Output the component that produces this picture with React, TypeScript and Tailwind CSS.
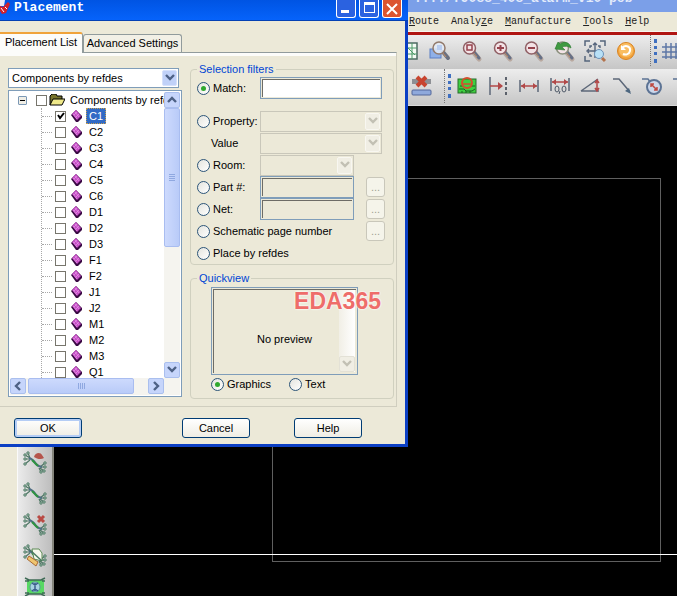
import type { ReactNode } from "react"
import { clsx } from "clsx"

const components = ["C1", "C2", "C3", "C4", "C5", "C6", "D1", "D2", "D3", "F1", "F2", "J1", "J2", "M1", "M2", "M3", "Q1"]

const menus = [
  { key: "R", rest: "oute" },
  { before: "Analy", key: "z", rest: "e" },
  { key: "M", rest: "anufacture" },
  { key: "T", rest: "ools" },
  { key: "H", rest: "elp" },
]

/* ---------- icons ---------- */

function Icon({ children }: { children: ReactNode }) {
  return (
    <svg viewBox="0 0 24 24" className="h-6 w-6 shrink-0" fill="none">
      {children}
    </svg>
  )
}

function Magnifier({ children, ring = "#8f5f64" }: { children?: ReactNode; ring?: string }) {
  return (
    <Icon>
      <path d="M15 14l5 6" stroke="#b9a9a0" strokeWidth="5" strokeLinecap="round" />
      <path d="M15 13l5 6" stroke="#667086" strokeWidth="3" strokeLinecap="round" />
      <path d="M14 13l4 5" stroke="#c98f62" strokeWidth="1" />
      <circle cx="10.500" cy="9" r="6" fill="#f3e3e6" stroke={ring} strokeWidth="1.500" />
      {children}
    </Icon>
  )
}

const GridIcon = () => (
  <Icon>
    <rect x="3" y="4" width="17" height="16" fill="#f4fbf4" stroke="#4c6b62" strokeWidth="1.500" />
    <path d="M3 9h17M3 15h17M9 4v16M15 4v16M9 7l9 9" stroke="#4c9a68" />
  </Icon>
)

const ZoomWindowIcon = () => (
  <Icon>
    <rect x="2" y="10" width="11" height="9" fill="#8fb0e8" stroke="#5b7fc4" />
    <path d="M15 13l5 6" stroke="#6a7080" strokeWidth="4" strokeLinecap="round" />
    <path d="M14 13l4 5" stroke="#c98f62" />
    <circle cx="11" cy="9" r="6" fill="#e3ebf7" fillOpacity=".85" stroke="#927a6c" strokeWidth="1.500" />
    <rect x="9" y="6" width="5" height="5" fill="#b9cdf0" />
  </Icon>
)

const ZoomPrevIcon = () => (
  <Magnifier ring="#8a8f7c">
    <path d="M3 10l3-7 2 2c4-3 10-2 11 4-3-2-6-2-9-1l3 3z" fill="#3f9a41" stroke="#2a7a30" strokeWidth=".6" />
  </Magnifier>
)

const ZoomFitIcon = () => (
  <Icon>
    <path d="M2 7V2h5M17 2h5v5M2 17v5h5" stroke="#56657c" strokeWidth="1.500" />
    <path d="M12 5v14M5 12h14M10 6l2-2 2 2M6 10l-2 2 2 2M7 9V7h2M15 7h2v2M7 15v2h2" stroke="#56657c" strokeWidth="1.400" />
    <path d="M19 19l3 3" stroke="#b3734d" strokeWidth="3" />
    <circle cx="16" cy="15" r="4.500" fill="#b8e0f6" stroke="#6d92b8" />
  </Icon>
)

const RefreshIcon = () => (
  <Icon>
    <circle cx="12" cy="12" r="8.500" fill="#f3a33c" stroke="#d98422" />
    <circle cx="12" cy="11" r="7" fill="#f9bd62" />
    <path d="M8 9c4-4 9-1 8 3-1 4-5 4-7 3" stroke="#fff" strokeWidth="2" />
    <path d="M7 6v5h5z" fill="#fff" />
  </Icon>
)

const BlueGridIcon = () => (
  <Icon>
    <path d="M5 4v16M10 4v16M15 4v16M20 4v16M1 8h22M1 13h22M1 18h22" stroke="#5f78a6" strokeWidth="1.500" />
  </Icon>
)

const DeleteIcon = () => (
  <Icon>
    <rect x="2" y="5" width="19" height="5" fill="#8e9095" />
    <path d="M7 3l9 9M16 3l-9 9" stroke="#c8442f" strokeWidth="4" />
    <rect x="2" y="16" width="19" height="5" rx="1" fill="#8fa9dc" stroke="#53679a" />
  </Icon>
)

const BoardIcon = () => (
  <Icon>
    <rect x="3" y="5" width="18" height="14" fill="#3ed040" stroke="#2a6b2c" />
    <path d="M4 15h5l2 2h6l3-2M5 12h3M16 12h4M7 17v2M11 17v2M15 17v2" stroke="#1c5f22" />
    <circle cx="12" cy="9" r="5" stroke="#d2502d" strokeWidth="2" />
    <path d="M8 10h8" stroke="#d2502d" strokeWidth="1.500" />
  </Icon>
)

const DatumIcon = () => (
  <Icon>
    <path d="M4 3v18" stroke="#5c6778" strokeWidth="1.500" />
    <path d="M20 3v18" stroke="#333b48" strokeDasharray="3 2" strokeWidth="1.500" />
    <path d="M4 12h12" stroke="#b24848" strokeWidth="1.500" />
    <path d="M12 8l5 4-5 4z" fill="#b24848" />
  </Icon>
)

const LinearIcon = () => (
  <Icon>
    <path d="M3 6v12M21 6v12" stroke="#5c6778" strokeWidth="1.500" />
    <path d="M4 12h16" stroke="#b24848" strokeWidth="1.500" />
    <path d="M8 9l-4 3 4 3zM16 9l4 3-4 3z" fill="#b24848" />
  </Icon>
)

const OrdinateIcon = () => (
  <Icon>
    <path d="M3 4v13M21 4v13" stroke="#5c6778" strokeWidth="1.500" />
    <path d="M4 8h16" stroke="#b24848" strokeWidth="1.500" />
    <path d="M8 5L4 8l4 3zM16 5l4 3-4 3z" fill="#b24848" />
    <ellipse cx="9" cy="15" rx="2" ry="3" stroke="#4d5867" />
    <ellipse cx="16" cy="15" rx="2" ry="3" stroke="#4d5867" />
    <path d="M12 17l-1 3" stroke="#4d5867" />
  </Icon>
)

const AngleIcon = () => (
  <Icon>
    <path d="M2 17L19 5M2 17h18" stroke="#5c6778" strokeWidth="1.500" />
    <path d="M18 7v9M16 9l2-3 2 3M16 14l2 3 2-3" stroke="#b24848" strokeWidth="1.500" />
  </Icon>
)

const LeaderIcon = () => (
  <Icon>
    <path d="M3 5h6l11 13" stroke="#5c6778" strokeWidth="1.500" />
    <path d="M21 20l-6-3 4-3z" fill="#4d6780" />
  </Icon>
)

const DiameterIcon = () => (
  <Icon>
    <path d="M1 5h6l3 4" stroke="#5c7394" strokeWidth="1.500" />
    <circle cx="13" cy="13" r="7" fill="#ccd7ea" stroke="#5c7394" strokeWidth="2" />
    <path d="M10 10l6 6M10 13v-3h3M16 13v3h-3" stroke="#bd4a42" strokeWidth="1.500" />
  </Icon>
)

// routed net with three pins at both ends, shared by the side toolbar
function NetIcon({ children }: { children?: ReactNode }) {
  return (
    <Icon>
      <path d="M2 4l5 3M2 8h5M2 13l5-4M5 2l2 5M17 16l5-4M17 16h5M17 17l4 3M16 17l2 4" stroke="#4f7765" strokeWidth="1.200" />
      <path d="M6 7c4 1 5 3 7 6 2 2 3 3 6 3" stroke="#506d85" strokeWidth="2.200" />
      <path d="M9 9l6 6" stroke="#2f9440" strokeWidth="2" />
      {[[2, 4], [2, 8], [2, 13], [5, 2], [22, 12], [22, 16], [21, 20], [18, 21]].map(([x, y]) => (
        <circle key={`${x}-${y}`} cx={x} cy={y} r="1.200" fill="#c7dccf" stroke="#3a6b54" strokeWidth=".9" />
      ))}
      {children}
    </Icon>
  )
}

const BoxNetIcon = () => (
  <Icon>
    <rect x="4" y="5" width="17" height="14" fill="#58d863" />
    <path d="M2 3l4 2h12l4-2M2 21l4-2h12l4 2M2 6h4M19 6h3M2 18h4M19 18h3" stroke="#3f6b56" strokeWidth="1.500" />
    <circle cx="12" cy="12" r="5" fill="#a8d3e2" stroke="#5a93a0" />
    <path d="M12 8v8M9 8l3 2 3-2M9 16l3-2 3 2" stroke="#3b5d8c" strokeWidth="1.500" />
  </Icon>
)

const PartIcon = () => (
  <svg viewBox="0 0 11 12" className="h-3 w-[11px] shrink-0">
    <path d="M0 5l5 7h2l4-4V6L5 0z" fill="#3a0a44" />
    <path d="M1 4l4-4 5 6-4 4z" fill="#c54cc5" />
    <path d="M2 4l4 5M4 2l4 5M3 5l3-3M5 7l3-3" stroke="#e89ae8" strokeWidth=".7" />
  </svg>
)

const FolderIcon = () => (
  <svg viewBox="0 0 16 12" className="h-3 w-4 shrink-0">
    <path d="M1 11V2l2-2h4l1 2h5v3" fill="#77742c" stroke="#000" />
    <path d="M1 11l3-6h12l-3 6z" fill="#efe98a" stroke="#000" />
  </svg>
)

function Chevron({ dir = "down", muted }: { dir?: "up" | "down" | "left" | "right"; muted?: boolean }) {
  const paths = { down: "M1 2l4 4 4-4", up: "M1 7l4-4 4 4", left: "M7 1L3 5l4 4", right: "M3 1l4 4-4 4" }
  return (
    <svg viewBox="0 0 10 10" className="h-[10px] w-[10px]" fill="none">
      <path d={paths[dir]} stroke={muted ? "#c2c0b4" : "#4d6185"} strokeWidth="2.400" />
    </svg>
  )
}

/* ---------- form pieces ---------- */

function Dropdown({ label, value, disabled, className }: { label: string; value?: string; disabled?: boolean; className?: string }) {
  return (
    <div className={clsx("relative", className)}>
      <select
        aria-label={label}
        disabled={disabled}
        className={clsx(
          "h-full w-full appearance-none border pl-[3px] pr-5 text-[11px] text-black outline-none",
          disabled ? "border-[#c9c7ba] bg-[#ece9d8]" : "border-[#7f9db9] bg-white",
        )}
      >
        <option>{value}</option>
      </select>
      <span
        className={clsx(
          "pointer-events-none absolute inset-y-[2px] right-[2px] flex w-[15px] items-center justify-center rounded-[2px] border",
          disabled ? "border-[#f8f7f1] bg-[#f0eee4]" : "border-[#d6e1fb] bg-[#c0d1f8]",
        )}
      >
        <Chevron muted={disabled} />
      </span>
    </div>
  )
}

function Radio({ name, label, checked }: { name: string; label: string; checked?: boolean }) {
  return (
    <label className="flex items-center gap-[3px] whitespace-nowrap">
      <span className="grid h-[13px] w-[13px] shrink-0 place-items-center">
        <input
          type="radio"
          name={name}
          defaultChecked={checked}
          className="peer col-start-1 row-start-1 h-[13px] w-[13px] appearance-none rounded-full border border-[#2c5579] bg-linear-to-br from-[#e4e4de] to-white"
        />
        <span className="pointer-events-none col-start-1 row-start-1 hidden h-[5px] w-[5px] rounded-full bg-[#2fa82f] peer-checked:block" />
      </span>
      {label}
    </label>
  )
}

function CheckBox({ id, checked }: { id: string; checked?: boolean }) {
  return (
    <span className="grid h-[11px] w-[11px] shrink-0 place-items-center">
      <input
        id={id}
        type="checkbox"
        defaultChecked={checked}
        className="peer col-start-1 row-start-1 h-[11px] w-[11px] appearance-none border border-[#77756c] bg-white"
      />
      <svg viewBox="0 0 8 8" className="pointer-events-none col-start-1 row-start-1 hidden h-2 w-2 peer-checked:block">
        <path d="M1 3l2 3 4-5" stroke="#000" strokeWidth="2" fill="none" />
      </svg>
    </span>
  )
}

function ScrollButton({ dir }: { dir: "up" | "down" | "left" | "right" }) {
  return (
    <button
      type="button"
      aria-label={`Scroll ${dir}`}
      className="flex h-4 w-4 shrink-0 items-center justify-center rounded-[2px] border border-[#aabfee] bg-[#c6d5fb]"
    >
      <Chevron dir={dir} />
    </button>
  )
}

function TextField({ label, disabled, className }: { label: string; disabled?: boolean; className?: string }) {
  return (
    <input
      type="text"
      aria-label={label}
      disabled={disabled}
      className={clsx(
        "h-[22px] border border-[#7f9db9] px-1 shadow-[inset_0_0_0_1px_#ece9d8,inset_2px_2px_0_#6d6c66]",
        disabled ? "bg-[#ece9d8]" : "bg-white",
        className,
      )}
    />
  )
}

function MoreButton({ label }: { label: string }) {
  return (
    <button
      type="button"
      aria-label={label}
      disabled
      className="ml-3 flex h-5 w-[19px] items-center justify-center rounded-[3px] border border-[#c9c7ba] bg-[#f5f4ea] text-[#a1a192]"
    >
      ...
    </button>
  )
}

function FilterRow({ children, control }: { children: ReactNode; control?: ReactNode }) {
  return (
    <div className="flex h-[22px] items-center">
      <div className="w-[63px] shrink-0">{children}</div>
      {control}
    </div>
  )
}

function PushButton({ children, primary }: { children: ReactNode; primary?: boolean }) {
  return (
    <button
      type="button"
      className={clsx(
        "h-5 w-[68px] rounded-[3px] border border-[#003c74] bg-linear-to-b from-white to-[#efede4]",
        primary && "shadow-[inset_0_0_0_2px_#b5cdf5]",
      )}
    >
      {children}
    </button>
  )
}

/* ---------- dialog ---------- */

function ComponentTree() {
  return (
    <div className="mt-[2px] flex h-[307px] flex-col border border-[#7f9db9] bg-white p-px">
      <div className="flex min-h-0 flex-1">
        <div className="min-w-0 flex-1 overflow-hidden">
          <div className="flex h-4 items-center pl-2">
            <button
              type="button"
              aria-label="Collapse"
              className="mr-[9px] flex h-[9px] w-[9px] shrink-0 items-center justify-center rounded-[1px] border border-[#7b98b5] bg-[#f0eee6]"
            >
              <span className="h-px w-[5px] bg-black" />
            </button>
            <CheckBox id="all" />
            <span className="ml-[2px] flex">
              <FolderIcon />
            </span>
            <label htmlFor="all" className="ml-[5px] whitespace-nowrap">
              Components by refdes
            </label>
          </div>
          <ul className="ml-[31px] border-l border-dotted border-[#a8a8a8]">
            {components.map((name) => (
              <li key={name} className="flex h-4 items-center">
                <span className="mr-[3px] w-[10px] border-t border-dotted border-[#a8a8a8]" />
                <CheckBox id={name} checked={name === "C1"} />
                <span className="ml-[5px] flex">
                  <PartIcon />
                </span>
                <label
                  htmlFor={name}
                  className={clsx(
                    "ml-1 h-4 px-[3px] leading-4",
                    name === "C1" && "bg-[#316ac5] text-white outline-1 -outline-offset-1 outline-dotted outline-[#c9a050]",
                  )}
                >
                  {name}
                </label>
              </li>
            ))}
          </ul>
        </div>
        <div className="flex w-4 flex-col bg-[#f5f4ef]">
          <ScrollButton dir="up" />
          <div className="flex h-[139px] flex-col items-center justify-center gap-px rounded-[2px] border border-[#a9bdf0] bg-linear-to-r from-[#cddafd] to-[#b9cbf8]">
            {[0, 1, 2, 3].map((i) => (
              <span key={i} className="h-px w-[6px] bg-[#8fa8e0]" />
            ))}
          </div>
          <div className="mt-auto">
            <ScrollButton dir="down" />
          </div>
        </div>
      </div>
      <div className="flex h-[17px] bg-[#f5f4ef] pr-4">
        <ScrollButton dir="left" />
        <div className="ml-[2px] flex h-4 w-[106px] items-center justify-center gap-px rounded-[2px] border border-[#a9bdf0] bg-linear-to-b from-[#cddafd] to-[#b9cbf8]">
          {[0, 1, 2, 3].map((i) => (
            <span key={i} className="h-[6px] w-px bg-[#8fa8e0]" />
          ))}
        </div>
        <div className="ml-auto">
          <ScrollButton dir="right" />
        </div>
      </div>
    </div>
  )
}

function SelectionFilters() {
  return (
    <fieldset className="min-w-0 rounded-[4px] border border-[#d0d0bf] pl-[6px] pt-px">
      <legend className="h-[14px] px-[2px] leading-[14px] text-[#0046d5]">Selection filters</legend>
      <div className="mb-[11px]">
        <FilterRow control={<TextField label="Match text" className="w-[122px]" />}>
          <Radio name="filter" label="Match:" checked />
        </FilterRow>
      </div>
      <FilterRow control={<Dropdown label="Property" disabled className="h-[21px] w-[122px]" />}>
        <Radio name="filter" label="Property:" />
      </FilterRow>
      <FilterRow control={<Dropdown label="Value" disabled className="h-[21px] w-[122px]" />}>
        <span className="pl-[14px]">Value</span>
      </FilterRow>
      <FilterRow control={<Dropdown label="Room" disabled className="h-[21px] w-[94px]" />}>
        <Radio name="filter" label="Room:" />
      </FilterRow>
      <FilterRow
        control={
          <>
            <TextField label="Part number" disabled className="w-[94px]" />
            <MoreButton label="Browse parts" />
          </>
        }
      >
        <Radio name="filter" label="Part #:" />
      </FilterRow>
      <FilterRow
        control={
          <>
            <TextField label="Net name" disabled className="w-[94px]" />
            <MoreButton label="Browse nets" />
          </>
        }
      >
        <Radio name="filter" label="Net:" />
      </FilterRow>
      <div className="flex h-[22px] items-center justify-between pr-2">
        <Radio name="filter" label="Schematic page number" />
        <MoreButton label="Browse pages" />
      </div>
      <FilterRow>
        <Radio name="filter" label="Place by refdes" />
      </FilterRow>
    </fieldset>
  )
}

function Quickview() {
  return (
    <fieldset className="mt-[6px] min-w-0 rounded-[4px] border border-[#d0d0bf] pb-1 pl-5">
      <legend className="-ml-[14px] h-[14px] px-[2px] leading-[14px] text-[#0046d5]">Quickview</legend>
      <div className="relative mt-[2px] flex h-[88px] w-[147px] items-center justify-center border border-[#7f9db9] shadow-[inset_0_0_0_1px_#ece9d8,inset_2px_2px_0_#6d6c66]">
        <span className="pt-4">No preview</span>
        <div className="absolute bottom-[2px] right-[2px] top-[2px] flex w-4 flex-col justify-end bg-linear-to-r from-[#f1efe6] to-white">
          <span className="flex h-4 items-center justify-center rounded-[2px] border border-[#e3e1d6] bg-[#f0eee4]">
            <Chevron muted />
          </span>
        </div>
        <span className="absolute -right-6 top-0 text-[23px] font-bold leading-[26px] text-[#ee6d6a] [text-shadow:0_0_2px_#fff,0_0_2px_#fff]">
          EDA365
        </span>
      </div>
      <div className="flex h-[19px] items-center gap-[18px]">
        <Radio name="view" label="Graphics" checked />
        <Radio name="view" label="Text" />
      </div>
    </fieldset>
  )
}

function PlacementDialog() {
  return (
    <section
      aria-label="Placement"
      className="absolute left-0 top-0 z-10 w-[408px] border-b-3 border-r-3 border-[#0b3fc4] bg-[#ece9d8] text-[11px] text-black"
    >
      <header className="-mr-[3px] flex h-[21px] items-start border-b border-[#0340b4] bg-linear-to-b from-[#0054e3] to-[#0663fb] pr-[6px]">
        <svg viewBox="0 0 10 16" className="h-4 w-[10px]">
          <path d="M0 0h5l-1 6H0z" fill="#eceaf6" />
          <path d="M0 6l3 1 5-5 2 2-4 9-4 1-2-3z" fill="#d3202b" />
          <path d="M1 8l3 4M5 7l2 2" stroke="#fff" />
        </svg>
        <h1 className="ml-1 font-['Liberation_Mono',monospace] text-[13px] font-bold leading-4 text-white">Placement</h1>
        <div className="ml-auto flex gap-[3px]">
          <button type="button" aria-label="Minimize" className="flex h-[18px] w-5 items-end rounded-b-[3px] border border-t-0 border-white bg-[#2b62e0] pb-1 pl-1">
            <span className="h-[3px] w-2 bg-white" />
          </button>
          <button type="button" aria-label="Maximize" className="flex h-[18px] w-5 items-end justify-center rounded-b-[3px] border border-t-0 border-white bg-[#2b62e0] pb-1">
            <span className="h-[11px] w-[11px] border border-t-3 border-white" />
          </button>
          <button type="button" aria-label="Close" className="flex h-[18px] w-5 items-center justify-center rounded-b-[3px] border border-t-0 border-white bg-[#dc5430]">
            <svg viewBox="0 0 12 12" className="h-3 w-3">
              <path d="M1 1l10 10M11 1L1 11" stroke="#fff" strokeWidth="2" />
            </svg>
          </button>
        </div>
      </header>

      <div role="tablist" className="flex items-end pt-[11px]">
        <button
          type="button"
          role="tab"
          aria-selected="true"
          className="relative -mb-px h-[21px] w-[83px] rounded-tr-[3px] border-r border-t-2 border-r-[#919b9c] border-t-[#f0a33a] bg-[#fcfcfa] pb-[2px]"
        >
          Placement List
        </button>
        <button
          type="button"
          role="tab"
          aria-selected="false"
          className="h-[18px] w-[99px] rounded-t-[3px] border border-b-0 border-[#919b9c] bg-[#f2f0e6] whitespace-nowrap"
        >
          Advanced Settings
        </button>
      </div>

      <div className="mr-2 border-b border-r border-t border-b-[#d0cebf] border-r-[#d0cebf] border-t-[#919b9c]">
        <div className="flex gap-2 border-t-3 border-[#fcfcfa] pb-[7px] pl-2 pr-[2px] pt-[6px]">
          <div className="w-[174px] shrink-0 pt-[6px]">
            <Dropdown label="Component list" value="Components by refdes" className="h-5 w-[171px]" />
            <ComponentTree />
          </div>
          <div className="min-w-0 flex-1">
            <SelectionFilters />
            <Quickview />
          </div>
        </div>
      </div>

      <footer className="flex pb-[6px] pl-[14px] pt-[11px]">
        <PushButton primary>OK</PushButton>
        <div className="ml-[100px] flex gap-11">
          <PushButton>Cancel</PushButton>
          <PushButton>Help</PushButton>
        </div>
      </footer>
    </section>
  )
}

/* ---------- main window ---------- */

function Tool({ label, children }: { label: string; children: ReactNode }) {
  return (
    <button type="button" aria-label={label} className="flex h-[31px] w-[31px] shrink-0 items-center justify-center">
      {children}
    </button>
  )
}

function Grip() {
  return (
    <div className="flex h-full shrink-0 items-center gap-[3px] border-l border-dotted border-[#777]">
      <span className="ml-[3px] h-6 border-l-3 border-dotted border-[#3f6fc0]" />
    </div>
  )
}

export default function App() {
  return (
    <div className="relative flex h-screen flex-col overflow-hidden bg-white pb-[5px] font-['Liberation_Sans',Arial,sans-serif]">
      <header className="flex h-3 shrink-0 items-end overflow-hidden bg-[#7b9fe8] pb-[5px] pl-[414px] font-['Liberation_Mono',monospace] text-[13px] font-bold leading-4 text-[#e3ebfb]">
        <span className="whitespace-nowrap">..../f9088_408_alarm_v10 pcb</span>
      </header>

      <nav className="flex h-5 shrink-0 items-center gap-3 border-b border-[#f7f6f0] bg-[#ece9d8] pl-[409px] font-['Liberation_Mono',monospace] text-[10px] text-[#222]">
        {menus.map((menu) => (
          <button type="button" key={menu.rest}>
            {menu.before}
            <u>{menu.key}</u>
            {menu.rest}
          </button>
        ))}
      </nav>

      <div className="shrink-0 overflow-hidden border-b border-t-3 border-b-[#d9d9d9] border-t-[#b01513]">
        <div className="flex h-[34px] items-center bg-linear-to-b from-[#ededed] to-[#c6c6c6] pb-[3px] pl-[393px]">
          <Tool label="Grid"><GridIcon /></Tool>
          <Tool label="Zoom by points"><ZoomWindowIcon /></Tool>
          <Tool label="Zoom selection">
            <Magnifier><rect x="8" y="6" width="5" height="5" stroke="#96424c" strokeWidth="1.500" /></Magnifier>
          </Tool>
          <Tool label="Zoom in">
            <Magnifier><path d="M7 9h7M10.500 6v6" stroke="#96424c" strokeWidth="2" /></Magnifier>
          </Tool>
          <Tool label="Zoom out">
            <Magnifier><path d="M7 9h7" stroke="#96424c" strokeWidth="2" /></Magnifier>
          </Tool>
          <Tool label="Zoom previous"><ZoomPrevIcon /></Tool>
          <Tool label="Zoom fit"><ZoomFitIcon /></Tool>
          <Tool label="Redraw"><RefreshIcon /></Tool>
          <div className="ml-[9px] h-full"><Grip /></div>
          <Tool label="Grid toggle"><BlueGridIcon /></Tool>
        </div>
        <div className="flex h-9 items-center bg-linear-to-b from-[#ededed] to-[#c6c6c6] pb-[2px] pl-[406px]">
          <Tool label="Delete"><DeleteIcon /></Tool>
          <div className="ml-[7px] h-full"><Grip /></div>
          <Tool label="Drafting"><BoardIcon /></Tool>
          <Tool label="Datum dimension"><DatumIcon /></Tool>
          <Tool label="Linear dimension"><LinearIcon /></Tool>
          <Tool label="Ordinate dimension"><OrdinateIcon /></Tool>
          <Tool label="Angular dimension"><AngleIcon /></Tool>
          <Tool label="Leader line"><LeaderIcon /></Tool>
          <Tool label="Diameter"><DiameterIcon /></Tool>
          <Tool label="Radius"><DiameterIcon /></Tool>
        </div>
      </div>

      <main className="flex min-h-0 flex-1">
        <div className="w-[17px] shrink-0 bg-[#ece9d8]" />
        <aside className="flex w-[37px] shrink-0 flex-col items-center overflow-hidden border-l border-r-2 border-l-[#fafafa] border-r-[#85857c] bg-linear-to-r from-[#ebebeb] to-[#bdbdbd] pt-[338px]">
          <span className="w-[21px] shrink-0 border-t-3 border-dotted border-[#3f6fc0]" />
          <Tool label="Unrats net">
            <NetIcon><path d="M11 6c1-5 7-5 8-2l2 3c-3 2-7 1-10-1z" fill="#b5544c" /></NetIcon>
          </Tool>
          <Tool label="Rats net"><NetIcon /></Tool>
          <Tool label="Delete net">
            <NetIcon><path d="M15 3l6 6M21 3l-6 6" stroke="#b94a44" strokeWidth="3" /></NetIcon>
          </Tool>
          <Tool label="Edit net">
            <NetIcon>
              <path d="M9 5h7l3 4v8l-8-2z" fill="#f6f8ee" stroke="#5c8a55" />
              <path d="M4 15l2-3 9 6-2 4z" fill="#efc56f" stroke="#a96a35" />
              <path d="M7 6l12 11" stroke="#4a7a63" strokeWidth="1.500" />
            </NetIcon>
          </Tool>
          <Tool label="Net group"><BoxNetIcon /></Tool>
        </aside>
        {/* board canvas: outline and cursor line */}
        <div className="min-w-0 flex-1 bg-black">
          <svg className="h-full w-full" fill="none" shapeRendering="crispEdges">
            <rect x="218" y="72" width="388" height="383" stroke="#5f5f5f" />
            <path d="M0 448h2000" stroke="#fff" />
          </svg>
        </div>
      </main>

      <PlacementDialog />
    </div>
  )
}
